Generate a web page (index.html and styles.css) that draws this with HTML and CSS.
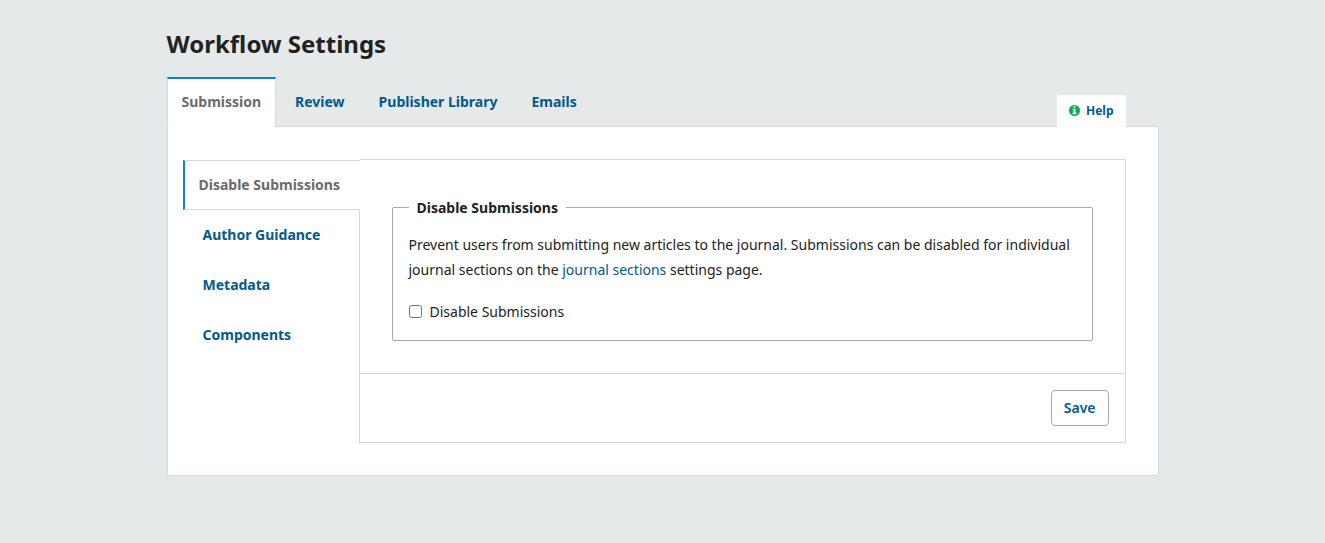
FILE: index.html
```html
<!DOCTYPE html>
<html lang="en">
<head>
<meta charset="utf-8">
<title>Workflow Settings</title>
<link rel="stylesheet" href="styles.css">
</head>
<body>
<main class="page">
  <h1 class="page-title">Workflow Settings</h1>
  <div class="topbar">
    <div class="tabs" role="tablist">
      <button class="tab tab-active" type="button" role="tab" aria-selected="true">Submission</button>
      <button class="tab" type="button" role="tab" aria-selected="false">Review</button>
      <button class="tab" type="button" role="tab" aria-selected="false">Publisher Library</button>
      <button class="tab" type="button" role="tab" aria-selected="false">Emails</button>
    </div>
    <button class="help" type="button">
      <svg class="help-icon" viewBox="0 0 1536 1536" aria-hidden="true"><path fill="#00b24e" fill-rule="evenodd" d="M768 0a768 768 0 1 1 0 1536a768 768 0 1 1 0-1536zM1024 1248v-160q0-14-9-23t-23-9h-96V544q0-14-9-23t-23-9H544q-14 0-23 9t-9 23v160q0 14 9 23t23 9h96v320h-96q-14 0-23 9t-9 23v160q0 14 9 23t23 9h448q14 0 23-9t9-23zM896 352V192q0-14-9-23t-23-9H672q-14 0-23 9t-9 23v160q0 14 9 23t23 9h192q14 0 23-9t9-23z"/></svg>
      <span>Help</span>
    </button>
  </div>
  <section class="panel">
    <div class="side" role="tablist">
      <button class="side-tab side-tab-active" type="button" role="tab" aria-selected="true">Disable Submissions</button>
      <button class="side-tab" type="button" role="tab" aria-selected="false">Author Guidance</button>
      <button class="side-tab" type="button" role="tab" aria-selected="false">Metadata</button>
      <button class="side-tab" type="button" role="tab" aria-selected="false">Components</button>
    </div>
    <form class="form">
      <div class="form-body">
        <fieldset class="group">
          <legend class="legend">Disable Submissions</legend>
          <p class="description">Prevent users from submitting new articles to the journal. Submissions can be disabled for individual journal sections on the <a class="link" href="#sections">journal sections</a> settings page.</p>
          <label class="option"><input class="checkbox" type="checkbox"><span>Disable Submissions</span></label>
        </fieldset>
      </div>
      <div class="form-footer">
        <button class="save" type="button">Save</button>
      </div>
    </form>
  </section>
</main>
</body>
</html>
```
FILE: styles.css
```css
* {
  box-sizing: border-box;
}

body {
  margin: 0;
  background: #e5e9ea;
  color: #222;
  font: 14px/25px "Noto Sans", sans-serif;
}

button {
  margin: 0;
  background: transparent;
  color: #005a8a;
  font: inherit;
  font-weight: 700;
  cursor: pointer;
}

.page {
  max-width: 992px;
  margin: 0 auto;
  padding: 28px 0 64px;
}

.page-title {
  margin: 0 0 17px;
  font-size: 24px;
  line-height: 32px;
}

.topbar {
  position: relative;
  display: flex;
  justify-content: space-between;
  align-items: flex-end;
  margin-bottom: -1px;
  padding-right: 33px;
}

.tabs {
  display: flex;
}

.tab {
  height: 50px;
  padding: 0 16px 2px;
  border: 1px solid transparent;
  border-top-width: 2px;
}

.tab-active {
  margin-right: 2px;
  padding: 0 14px 4px;
  border-color: #0b84c6 #d8d8d8 #fff;
  border-bottom: 0;
  background: #fff;
  color: #6b6b6b;
}

.help {
  display: flex;
  align-items: center;
  gap: 6px;
  height: 32px;
  padding: 0 12px 2px;
  border: 0;
  border-radius: 2px 2px 0 0;
  background: #fff;
  font-size: 12px;
}

.help-icon {
  width: 11px;
  height: 11px;
}

.panel {
  display: flex;
  padding: 32px 32px 31px 15px;
  border: 1px solid #d8d8d8;
  border-radius: 2px;
  background: #fff;
}

.side {
  position: relative;
  flex: none;
  width: 177px;
  margin-top: 1px;
  border-right: 1px solid #d8d8d8;
}

.side-tab {
  display: block;
  width: 100%;
  height: 50px;
  padding: 0 20px 2px;
  border: 0;
  text-align: left;
}

.side-tab-active {
  width: 177px;
  padding: 0 14px 2px;
  border: solid #d8d8d8;
  border-width: 1px 0;
  border-left: 2px solid #0b84c6;
  background: #fff;
  color: #6b6b6b;
}

.form {
  flex: 1;
  min-width: 0;
  margin: 0 0 1px;
  border: 1px solid #d8d8d8;
  border-left: 0;
}

.form-body {
  padding: 32px;
}

.group {
  margin: 0;
  padding: 9px 16px 16px;
  border: 1px solid #aaa;
  border-radius: 2px;
}

.legend {
  padding: 0 8px;
  line-height: 31px;
  font-weight: 700;
}

.description {
  margin: 0 0 17px;
}

.link {
  color: #005a8a;
  text-decoration: none;
}

.option {
  display: flex;
  align-items: center;
  gap: 8px;
}

.checkbox {
  width: 13px;
  height: 13px;
  margin: 0;
}

.form-footer {
  display: flex;
  justify-content: flex-end;
  padding: 16px;
  border-top: 1px solid #d8d8d8;
}

.save {
  height: 36px;
  padding: 0 12px 2px;
  border: 1px solid #aaa;
  border-radius: 4px;
  font-weight: 600;
}
```
